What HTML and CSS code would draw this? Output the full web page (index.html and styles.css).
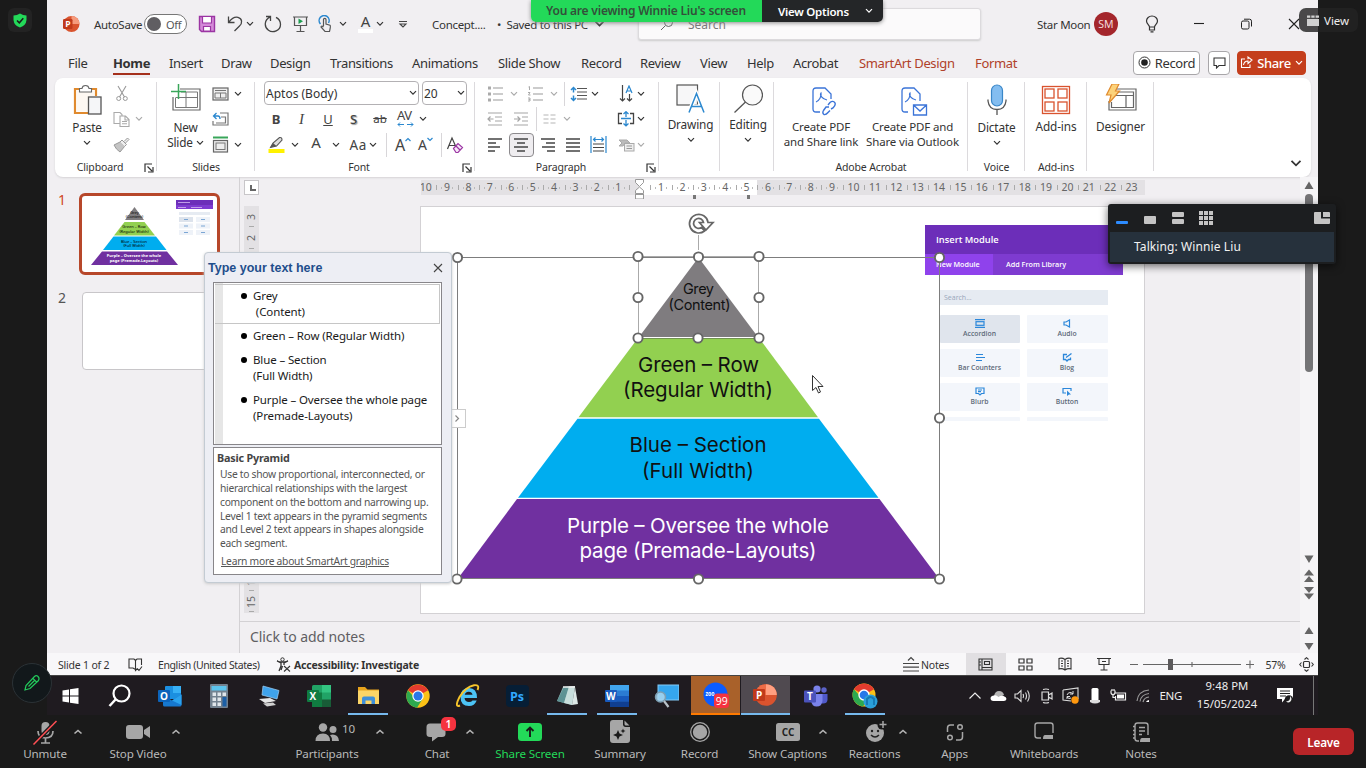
FILE: index.html
```html
<!DOCTYPE html>
<html lang="en">
<head>
<meta charset="utf-8">
<title>Winnie Liu's screen</title>
<link rel="stylesheet" href="styles.css">
</head>
<body>
<svg class="defs" width="0" height="0">
  <symbol id="chev" viewBox="0 0 8 6"><path d="M1 1.200 4 4.200 7 1.200" fill="none" stroke="currentColor" stroke-width="1.200"/></symbol>
  <symbol id="launch" viewBox="0 0 10 10"><path d="M1 9V1H8M3.500 3.500 8 8M9 4V9H4" fill="none" stroke="#333" stroke-width="1.200"/></symbol>
  <symbol id="up" viewBox="0 0 12 8"><path d="M2.500 5.500 6 2.500 9.500 5.500" fill="none" stroke="#b5b5b5" stroke-width="1.600"/></symbol>
</svg>

<div class="meeting">
  <main class="desktop">
    <header class="titlebar">
      <svg width="18" height="18" viewBox="0 0 18 18"><circle cx="9.500" cy="9" r="8" fill="#d9532e"/><path d="M9.500 1A8 8 0 0 1 17.500 9H9.500Z" fill="#f59a7c"/><rect x="1" y="4" width="9.500" height="10" rx="1.200" fill="#c13a1b"/><text x="3.200" y="12" class="logo-p">P</text></svg>
      <span class="t-small">AutoSave</span>
      <span class="toggle"><i></i>Off</span>
      <svg width="18" height="18" viewBox="0 0 18 18"><path d="M1.500 1.500H16.500V16.500H3.500L1.500 14.500Z" fill="#d48ad8" stroke="#9b35a3" stroke-width="1.400"/><path d="M4.500 1.500H13.500V8H4.500ZM5.500 16V11.500H12.500V16Z" fill="#fff" stroke="#9b35a3" stroke-width="1.200"/></svg>
      <svg width="17" height="18" viewBox="0 0 17 18"><path d="M1.500 1.500V7.500H7.500M1.700 7.300C5 3 8 1.500 11 2.300 15.500 3.500 15.500 8.500 12.500 11L7.500 16" fill="none" stroke="#444" stroke-width="1.300"/></svg>
      <svg class="chev" width="8" height="6"><use href="#chev"/></svg>
      <svg width="18" height="18" viewBox="0 0 18 18"><path d="M2 1.500H6.500V6M6 2.200C0 5 0 12 4.500 15.300 9 18.500 16.500 15.500 16.500 9.500 16.500 6 14.500 3.500 12 2.300" fill="none" stroke="#444" stroke-width="1.300"/></svg>
      <svg width="17" height="18" viewBox="0 0 17 18"><path d="M1 2H16M2.500 2V10.500H14.500V2M8.500 10.500V16M4.500 16.500H12.500" fill="none" stroke="#555" stroke-width="1.200"/><path d="M6.500 3.500 11 6.200 6.500 9Z" fill="#1d9d50"/></svg>
      <svg width="16" height="18" viewBox="0 0 16 18"><path d="M2.500 9A5 5 0 1 1 10.500 8" fill="none" stroke="#2b88cf" stroke-width="1.500"/><path d="M5.500 11V4.500C5.500 3 8 3 8 4.500V9L12 10.300C13 11 12 14 11.500 16.500H7L3 12C3 10.800 4.500 10.800 5.500 12" fill="#f1eff2" stroke="#555" stroke-width="1.200"/></svg>
      <svg class="chev" width="8" height="6"><use href="#chev"/></svg>
      <span class="fonta">A</span>
      <svg class="chev" width="8" height="6"><use href="#chev"/></svg>
      <svg width="10" height="9" viewBox="0 0 10 9"><path d="M1 1.500H9M2 4 5 7 8 4Z" fill="none" stroke="#444" stroke-width="1.100"/></svg>
      <span class="t-small">Concept....</span>
      <span class="t-small saved">•&nbsp; Saved to this PC <svg class="chev" width="11" height="8"><use href="#chev"/></svg></span>
      <div class="search"><svg width="14" height="14" viewBox="0 0 14 14"><path d="M1 13 5 9" stroke="#666"/><circle cx="8.500" cy="5.500" r="4" fill="none" stroke="#666"/></svg><span>Search</span></div>
      <span class="t-small name">Star Moon</span>
      <span class="avatar">SM</span>
      <svg width="14" height="18" viewBox="0 0 14 18"><path d="M4.500 12C4.500 10 1.500 9 1.500 6A5.500 5 0 0 1 12.500 6C12.500 9 9.500 10 9.500 12ZM4.500 12V15H9.500V12M5.500 16.800H8.500" fill="none" stroke="#333" stroke-width="1.200"/></svg>
      <svg width="12" height="12" viewBox="0 0 12 12"><path d="M1 5.500H11" stroke="#222" stroke-width="1.100"/></svg>
      <svg width="13" height="12" viewBox="0 0 13 12"><rect x="1.500" y="3" width="7.500" height="8" rx="1.500" fill="none" stroke="#222"/><path d="M4 1.200H9.500Q11.500 1.200 11.500 3.200V8.500" fill="none" stroke="#222"/></svg>
      <svg width="12" height="12" viewBox="0 0 12 12"><path d="M1 1 11 11M11 1 1 11" stroke="#222" stroke-width="1.100"/></svg>
    </header>

    <nav class="tabs">
      <span>File</span><span class="on">Home</span><span>Insert</span><span>Draw</span><span>Design</span><span>Transitions</span><span>Animations</span><span>Slide Show</span><span>Record</span><span>Review</span><span>View</span><span>Help</span><span>Acrobat</span><span class="ctx">SmartArt Design</span><span class="ctx">Format</span>
      <span class="btn"><svg width="13" height="13" viewBox="0 0 13 13"><circle cx="6.500" cy="6.500" r="5.500" fill="none" stroke="#333"/><circle cx="6.500" cy="6.500" r="3.300" fill="#222"/></svg>Record</span>
      <span class="btn comment"><svg width="13" height="12" viewBox="0 0 13 12"><path d="M1 1H12V8.500H6L3.500 11V8.500H1Z" fill="none" stroke="#333" stroke-width="1.100"/></svg></span>
      <span class="btn share"><svg width="13" height="13" viewBox="0 0 13 13"><path d="M5 3H1.500V11.500H10V8.500M3.500 9C4 6 6 5 8 5V7.500L12 4 8 1V3.200" fill="none" stroke="#fff" stroke-width="1.100"/></svg>Share<svg width="8" height="6"><use href="#chev"/></svg></span>
    </nav>

    <section class="ribbon">
      <div class="group">
        <div class="body clip">
          <div class="big"><svg width="30" height="32" viewBox="0 0 30 32"><path d="M9 5H3V29H16M20 5H24V12" fill="none" stroke="#e08a2e" stroke-width="2.200"/><path d="M4.500 6.500H22V13H16V27.500H4.500Z" fill="#fdf8f2"/><path d="M7.500 8V4.500H10C10.500 0.500 16.500 0.500 17 4.500H19.500V8Z" fill="#fff" stroke="#666" stroke-width="1.100"/><rect x="16.500" y="13" width="12.500" height="17" fill="#f5f6f8" stroke="#555" stroke-width="1.300"/></svg><span>Paste</span><svg class="chev" width="8" height="6"><use href="#chev"/></svg></div>
          <div class="trio pale">
            <svg width="12" height="17" viewBox="0 0 12 17"><path d="M2 1 8.500 12M10 1 3.500 12" stroke="#999" fill="none" stroke-width="1.100"/><circle cx="2.700" cy="13.500" r="2" fill="none" stroke="#999"/><circle cx="9.300" cy="13.500" r="2" fill="none" stroke="#999"/></svg><i></i>
            <svg width="17" height="17" viewBox="0 0 17 17"><path d="M7 12.500H1V1.500H7L9 3.500V5M7 15.500V5H12.500L16 8.500V15.500ZM12 5.500V9H16M9 10.500H14M9 12.800H14" fill="none" stroke="#aaa" stroke-width="1.100"/></svg><svg class="chev" width="8" height="6"><use href="#chev"/></svg>
            <svg width="17" height="16" viewBox="0 0 17 16"><path d="M1 8 7 5 11.500 9.500 7 15Q3 12.500 1 8Z" fill="#c4c4c4" stroke="#999"/><path d="M7 5 9 3 13.500 7.500 11.500 9.500M11 4.500 14.500 1 16 2.500 12.500 6" fill="#eee" stroke="#999"/></svg><i></i>
          </div>
        </div>
        <div class="label">Clipboard<svg width="10" height="10"><use href="#launch"/></svg></div>
      </div>
      <div class="group">
        <div class="body slides">
          <div class="big"><svg width="32" height="32" viewBox="0 0 32 32"><path d="M10 5H30V26H3V13" fill="none" stroke="#666" stroke-width="1.200"/><path d="M11 8H27.500V23.500H5.500V14M5.500 13.500H27.500M16 8V23.500" fill="none" stroke="#777" stroke-width="1"/><path d="M8.500 0V15M1 7.500H16" stroke="#39a65a" stroke-width="1.500"/></svg><span>New</span><span>Slide <svg class="chev" width="8" height="6"><use href="#chev"/></svg></span></div>
          <div class="trio">
            <svg width="17" height="14" viewBox="0 0 17 14"><rect x="1" y="1" width="15" height="12" fill="#eee" stroke="#666" stroke-width="1.200"/><path d="M3 3.500H14M3 6H14V11H3ZM8.500 6V11" fill="none" stroke="#777"/></svg><svg class="chev" width="8" height="6"><use href="#chev"/></svg>
            <svg width="17" height="14" viewBox="0 0 17 14"><path d="M8 1H16V13H1V9M4 11H13.500V5H9" fill="none" stroke="#777" stroke-width="1.200"/><path d="M4.500 1 1.500 4 4.500 7M2 4H6Q8 4 8 7" fill="none" stroke="#2b88cf" stroke-width="1.300"/></svg><i></i>
            <svg width="17" height="17" viewBox="0 0 17 17"><path d="M1 1.500H16" stroke="#39a65a" stroke-width="2"/><rect x="1.500" y="4.500" width="14" height="11.500" fill="#eee" stroke="#666" stroke-width="1.200"/><rect x="4" y="7" width="9" height="6.500" fill="none" stroke="#777"/></svg><svg class="chev" width="8" height="6"><use href="#chev"/></svg>
          </div>
        </div>
        <div class="label">Slides</div>
      </div>
      <div class="group">
        <div class="body rows">
          <div class="combos"><span class="combo">Aptos (Body)<svg width="8" height="6"><use href="#chev"/></svg></span><span class="combo">20<svg width="8" height="6"><use href="#chev"/></svg></span></div>
          <div class="row f2"><b>B</b><em>I</em><u>U</u><b class="shadow">S</b><s>ab</s><span class="av">AV<svg width="17" height="5" viewBox="0 0 17 5"><path d="M3 .5 1 2.500 3 4.500M1 2.500H7M10 2.500H16M14 .5 16 2.500 14 4.500" fill="none" stroke="#2b88cf"/></svg></span><svg class="chev" width="8" height="6"><use href="#chev"/></svg></div>
          <div class="row f3">
            <svg width="17" height="17" viewBox="0 0 17 17"><rect x=".5" y="13" width="16" height="4" fill="#fff200"/><path d="M2.500 11.500 5 7 11.500 1.500Q14 1 14 4L8.500 10Z" fill="#ddd" stroke="#555" stroke-width="1.100"/><path d="M2.500 11.500 5 7 8.500 10Z" fill="#555"/></svg><svg class="chev" width="8" height="6"><use href="#chev"/></svg>
            <span class="big-a">A</span><svg class="chev" width="8" height="6"><use href="#chev"/></svg><span class="aa">Aa</span><svg class="chev" width="8" height="6"><use href="#chev"/></svg><i class="sep"></i>
            <span class="grow">A<svg width="6" height="5" viewBox="0 0 6 5"><path d="M.5 4 3 1.500 5.500 4" fill="none" stroke="#2b88cf" stroke-width="1.200"/></svg></span>
            <span class="shrink">A<svg width="6" height="5" viewBox="0 0 6 5"><path d="M.5 1 3 3.500 5.500 1" fill="none" stroke="#2b88cf" stroke-width="1.200"/></svg></span><i class="sep"></i>
            <svg width="18" height="18" viewBox="0 0 18 18"><path d="M1.500 13 6 2 10 11M3 9.500H9" fill="none" stroke="#444" stroke-width="1.200"/><path d="M7.500 12.500 12 7.500 16.500 11.500 12 16.500H10ZM10 10 14 14" fill="#f7e9f9" stroke="#9b35a3" stroke-width="1.200"/></svg>
          </div>
        </div>
        <div class="label">Font<svg width="10" height="10"><use href="#launch"/></svg></div>
      </div>
      <div class="group">
        <div class="body rows">
          <div class="row p1">
            <svg class="pale" width="17" height="16" viewBox="0 0 17 16"><path d="M1 2H4M1 8H4M1 14H4" stroke="#aaa" stroke-width="3"/><path d="M6 2H16M6 8H16M6 14H16" stroke="#999" stroke-width="1.200"/></svg><svg class="chev dim" width="8" height="6"><use href="#chev"/></svg>
            <svg width="17" height="16" viewBox="0 0 17 16"><path d="M6 2H16M6 8H16M6 14H16" stroke="#999" stroke-width="1.200"/><path d="M1.500 1 2.500 .5V4M1 6.500H3L1.500 9H3.500M1 12H3V15H1M1.500 13.500H3" stroke="#aaa" fill="none"/></svg><svg class="chev dim" width="8" height="6"><use href="#chev"/></svg><i class="sep"></i>
            <svg width="18" height="16" viewBox="0 0 18 16"><path d="M7 2.500H17M7 6H17M7 9.500H17M7 13H17" stroke="#555" stroke-width="1.200"/><path d="M3.500 1.500V6.500M1 4 3.500 1.500 6 4M3.500 14.500V9.500M1 12 3.500 14.500 6 12" fill="none" stroke="#2b88cf" stroke-width="1.500"/></svg><svg class="chev" width="8" height="6"><use href="#chev"/></svg>
            <svg width="16" height="17" viewBox="0 0 16 17"><path d="M3.500 0V16M1 13.500 3.500 16 6 13.500M10.500 9V16M8 13.500 10.500 16 13 13.500" fill="none" stroke="#444" stroke-width="1.200"/><path d="M7 8 10 1 13 8M8 6H12" fill="none" stroke="#2b88cf" stroke-width="1.200"/></svg><svg class="chev" width="8" height="6"><use href="#chev"/></svg>
          </div>
          <div class="row p2">
            <svg width="16" height="14" viewBox="0 0 16 14"><path d="M1 1H15M8 5H15M8 9H15M1 13H15M6.500 7H1M3.500 4.500 1 7 3.500 9.500" fill="none" stroke="#a5a5a5" stroke-width="1.200"/></svg>
            <svg width="16" height="14" viewBox="0 0 16 14"><path d="M1 1H15M9 5H15M9 9H15M1 13H15M1 7H7M4.500 4.500 7 7 4.500 9.500" fill="none" stroke="#a5a5a5" stroke-width="1.200"/></svg><i class="sep"></i>
            <svg width="13" height="10" viewBox="0 0 13 10"><path d="M.5 1H5.500M7.500 1H12.500M.5 5H5.500M7.500 5H12.500M.5 9H5.500M7.500 9H12.500" stroke="#b5b5b5" stroke-width="1.200"/></svg><svg class="chev dim" width="8" height="6"><use href="#chev"/></svg>
            <svg width="18" height="16" viewBox="0 0 18 16"><path d="M5 2.500H1.500V12.500H5M13 2.500H16.500V12.500H13" fill="none" stroke="#444" stroke-width="1.300"/><path d="M9 1V6M9 9V14.500M6.500 3 9 .7 11.500 3M6.500 12.500 9 14.800 11.500 12.500M4 7.500H14" fill="none" stroke="#2b88cf" stroke-width="1.300"/></svg><svg class="chev" width="8" height="6"><use href="#chev"/></svg>
          </div>
          <div class="row p3">
            <svg width="16" height="14" viewBox="0 0 16 14"><path d="M1 1H15M1 5H9M1 9H13M1 13H8" stroke="#444" stroke-width="1.300"/></svg>
            <span class="boxed"><svg width="16" height="14" viewBox="0 0 16 14"><path d="M1 1H15M4 5H12M1 9H15M4 13H12" stroke="#444" stroke-width="1.300"/></svg></span>
            <svg width="16" height="14" viewBox="0 0 16 14"><path d="M1 1H15M6 5H15M2 9H15M7 13H15" stroke="#444" stroke-width="1.300"/></svg>
            <svg width="16" height="14" viewBox="0 0 16 14"><path d="M1 1H15M1 5H15M1 9H15M1 13H15" stroke="#444" stroke-width="1.300"/></svg>
            <svg width="17" height="17" viewBox="0 0 17 17"><path d="M1 0V17M16 0V17M3 3.500H14M5.500 1.500 3.500 3.500 5.500 5.500M11.500 1.500 13.500 3.500 11.500 5.500" stroke="#2b88cf" stroke-width="1.200" fill="none"/><path d="M3 8H14M3 11.500H14M3 15H14" stroke="#444" stroke-width="1.200"/></svg>
            <svg width="17" height="14" viewBox="0 0 17 14"><path d="M1 2H9L12 5H7L5 8H1L4 5Z" fill="#bbb" stroke="#aaa"/><rect x="6.500" y="5.500" width="9.500" height="7.500" fill="#eee" stroke="#aaa"/><path d="M8.500 8H14M8.500 10.500H14" stroke="#999"/></svg><svg class="chev dim" width="8" height="6"><use href="#chev"/></svg>
          </div>
        </div>
        <div class="label">Paragraph<svg width="10" height="10"><use href="#launch"/></svg></div>
      </div>
      <div class="group"><div class="body big single"><svg width="29" height="29" viewBox="0 0 29 29"><rect x="1" y="1" width="20.500" height="20" fill="#f7f7f8" stroke="#555" stroke-width="1.200"/><path d="M13 28.500 20.500 9.500 28 28.500M15.500 22.500H25.500" fill="none" stroke="#fff" stroke-width="4"/><path d="M13 28.500 20.500 9.500 28 28.500M15.500 22.500H25.500" fill="none" stroke="#2b88cf" stroke-width="1.500"/></svg><span>Drawing</span><svg class="chev" width="8" height="6"><use href="#chev"/></svg></div></div>
      <div class="group"><div class="body big single"><svg width="29" height="29" viewBox="0 0 29 29"><circle cx="18.500" cy="11" r="10" fill="#fafafa" stroke="#555" stroke-width="1.200"/><path d="M.5 28.500 11.500 18" stroke="#555" stroke-width="1.300"/></svg><span>Editing</span><svg class="chev" width="8" height="6"><use href="#chev"/></svg></div></div>
      <div class="group">
        <div class="body adobe">
          <div class="big"><svg width="30" height="29" viewBox="0 0 30 29"><path d="M14 25H10Q7 25 7 22V4Q7 1 10 1H19L25 7V12" fill="none" stroke="#3b74d8" stroke-width="1.300"/><path d="M10 15C13 14 16 9 15 6 13.500 8 16 12 21 13" fill="none" stroke="#3b74d8" stroke-width="1.200"/><path d="M22 18 24 15.500Q27 13 29 16 30 18 27 21L25 22M23 20 20 20 17.500 23.500Q16 26 18 27.500 20 28 22 25.500L24 23.500" fill="none" stroke="#3b74d8" stroke-width="1.400"/></svg><span>Create PDF</span><span>and Share link</span></div>
          <div class="big"><svg width="32" height="29" viewBox="0 0 32 29"><path d="M11 25H8Q5 25 5 22V4Q5 1 8 1H17L23 7V14" fill="none" stroke="#3b74d8" stroke-width="1.300"/><path d="M8 15C11 14 14 9 13 6 11.500 8 14 12 19 13" fill="none" stroke="#3b74d8" stroke-width="1.200"/><path d="M16.500 18H29.500V28H16.500ZM16.500 18 23 24 29.500 18" fill="#fff" stroke="#3b74d8" stroke-width="1.300"/></svg><span>Create PDF and</span><span>Share via Outlook</span></div>
        </div>
        <div class="label">Adobe Acrobat</div>
      </div>
      <div class="group"><div class="body big"><svg width="20" height="32" viewBox="0 0 20 32"><rect x="4.500" y="1" width="11" height="21" rx="5.500" fill="#83bdf0" stroke="#3a87c8" stroke-width="1.200"/><path d="M1 15.500V17Q2 25.500 10 25.500 18 25.500 19 17V15.500M10 25.500V31" fill="none" stroke="#555" stroke-width="1.300"/></svg><span>Dictate</span><svg class="chev" width="8" height="6"><use href="#chev"/></svg></div><div class="label">Voice</div></div>
      <div class="group"><div class="body big"><svg width="30" height="31" viewBox="0 0 30 31"><g fill="#fff" stroke="#d9532e" stroke-width="1.300"><rect x="1.500" y="2.500" width="27" height="27"/><rect x="4" y="5" width="9" height="9"/><rect x="17" y="5" width="9" height="9"/><rect x="4" y="18" width="9" height="9"/><rect x="17" y="18" width="9" height="9"/></g></svg><span>Add-ins</span></div><div class="label">Add-ins</div></div>
      <div class="group"><div class="body big"><svg width="32" height="31" viewBox="0 0 32 31"><path d="M10 5H31V26H4V17M12 8H28.500V23.500H6.500V18M11 11.500H28.500M21 11.500V23.500" fill="none" stroke="#666" stroke-width="1.200"/><path d="M7 0H14L10.500 7H14.500L4 19 6 11H1.500Z" fill="#fcd27a" stroke="#e08a2e" stroke-width="1.200"/></svg><span>Designer</span></div></div>
      <div class="collapse"><svg class="chev" width="12" height="9"><use href="#chev"/></svg></div>
    </section>

    <section class="workspace">
      <aside class="thumbs">
        <div class="thumb on"><b>1</b><div class="mini">
          <svg width="134" height="76" viewBox="0 0 134 76"><path d="M51.500 12 61 25H42Z" fill="#7f7c7f"/><path d="M41.500 27H61.500L72 40.500H31Z" fill="#92d050"/><path d="M30.500 41.500H73L83.500 55H20Z" fill="#00adef"/><path d="M19 56.500H84L95 70H8Z" fill="#7030a0"/><g class="mini-t"><text x="51.500" y="19">Grey</text><text x="51.500" y="23">(Content)</text><text x="51" y="32.500">Green – Row</text><text x="51" y="37.500">(Regular Width)</text><text x="51" y="47.500">Blue – Section</text><text x="51" y="52">(Full Width)</text><g fill="#fff"><text x="51" y="62" font-weight="bold">Purple – Oversee the whole</text><text x="51" y="66.500" font-weight="bold">page (Premade-Layouts)</text></g></g>
          <path d="M93 5H130V14H93Z" fill="#6c2eb9"/><path d="M93 10H130V14H93Z" fill="#7e3bd0"/><path d="M95 7.500H107M95 12.500H103M108 12.500H119" stroke="#d4b8f3" stroke-width=".8"/><path d="M96 17H127V20H96Z" fill="#e6ebf2"/><path d="M96 22H110V27H96Z" fill="#dde3ec"/><path d="M113 22H127V27H113ZM96 28.500H110V33.500H96ZM113 28.500H127V33.500H113ZM96 35H110V40H96ZM113 35H127V40H113Z" fill="#eef2f8"/><path d="M101 24.500H105M118 24.500H122M101 31H105M118 31H122M101 37.500H105M118 37.500H122" stroke="#7ba6d4" stroke-width="1"/></svg>
        </div></div>
        <div class="thumb"><b>2</b><div class="mini"></div></div>
      </aside>

      <div class="editor">
        <div class="hbar"><span class="corner"></span>
          <div class="ruler"><div class="ticks"><i class="d">10</i><i>9</i><i>8</i><i>7</i><i>6</i><i>5</i><i>4</i><i>3</i><i>2</i><i>1</i><i class="mid"></i><i class="w">1</i><i class="w">2</i><i class="w">3</i><i class="w">4</i><i class="w">5</i><i>6</i><i>7</i><i>8</i><i>9</i><i class="d">10</i><i class="d">11</i><i class="d">12</i><i class="d">13</i><i class="d">14</i><i class="d">15</i><i class="d">16</i><i class="d">17</i><i class="d">18</i><i class="d">19</i><i class="d">20</i><i class="d">21</i><i class="d">22</i><i class="d">23</i></div></div>
        </div>
        <div class="stage">
          <div class="vruler"><div class="vticks"><i>3</i><i>2</i><i>1</i><i></i><i>1</i><i>2</i><i>3</i><i>4</i><i>5</i><i>6</i><i>7</i><i>8</i><i>9</i><i>10</i><i>11</i><i>12</i><i>13</i><i>14</i><i>15</i></div></div>
          <div class="slide">
            <div class="module">
              <div class="m-head"><span>Insert Module</span><span>×</span></div>
              <div class="m-tabs"><span>New Module</span><span>Add From Library</span></div>
              <div class="m-body">
                <div class="m-search">Search...</div>
                <div class="m-grid">
                  <div class="hot"><svg width="10" height="9" viewBox="0 0 10 9"><path d="M0 .7H10M0 8.300H10" stroke="#2b87da" stroke-width="1.200"/><rect x="1" y="2.700" width="8" height="3.600" fill="none" stroke="#2b87da" stroke-width="1.200"/></svg>Accordion</div>
                  <div><svg width="10" height="9" viewBox="0 0 10 9"><path d="M2 3H4L7.500 1V8L4 6H2Z" fill="none" stroke="#2b87da" stroke-width="1.200"/></svg>Audio</div>
                  <div><svg width="10" height="9" viewBox="0 0 10 9"><path d="M1 1.500H8M1 4.500H10M1 7.500H7" stroke="#2b87da" stroke-width="1.200"/></svg>Bar Counters</div>
                  <div><svg width="10" height="9" viewBox="0 0 10 9"><path d="M5 1.500H1.500V6.500H3.500L5 8 6.500 6.500H8.500V4.500M4 4.500 9.500 .5" fill="none" stroke="#2b87da" stroke-width="1.300"/></svg>Blog</div>
                  <div><svg width="10" height="9" viewBox="0 0 10 9"><path d="M1 1H9V6.500H6.500L5 8 3.500 6.500H1ZM3 3H7M3 4.700H6" fill="none" stroke="#2b87da" stroke-width="1.200"/></svg>Blurb</div>
                  <div><svg width="10" height="9" viewBox="0 0 10 9"><path d="M4 6H1V1.500H9V4" fill="none" stroke="#2b87da" stroke-width="1.200"/><path d="M5 3.500V9L7 7.500H9Z" fill="#2b87da"/></svg>Button</div>
                  <div></div><div></div>
                </div>
              </div>
            </div>
            <svg class="art" width="724" height="408" viewBox="421 206 724 408">
              <path d="M698.500 257.500 758 337H639Z" fill="#7f7c7f"/>
              <path d="M638 338H759L818 417.300H578.500Z" fill="#92d050"/>
              <path d="M577.500 418.700H819L878.500 497.700H518Z" fill="#00adef"/>
              <path d="M517 499H879.500L939 578.500H458Z" fill="#7030a0"/>
              <g class="ptext">
                <g font-size="14.500"><text x="698.500" y="293.500" textLength="31">Grey</text><text x="699.500" y="310" textLength="62">(Content)</text></g>
                <text x="698.500" y="371.500" textLength="121">Green – Row</text><text x="698" y="396.500" textLength="150">(Regular Width)</text>
                <text x="698" y="452" textLength="137">Blue – Section</text><text x="698" y="477.500" textLength="112">(Full Width)</text>
                <g fill="#fff"><text x="698" y="532.500" textLength="262">Purple – Oversee the whole</text><text x="698" y="558" textLength="237">page (Premade-Layouts)</text></g>
              </g>
              <path d="M457.500 257.500H939.500V578.500H457.500Z" fill="none" stroke="#7d7d7d"/>
              <path d="M698.500 235V250" stroke="#aaa"/>
              <path d="M638.500 256.500H758.500V338.500H638.500Z" fill="none" stroke="#555" stroke-dasharray="1 1"/>
              <g fill="#fff" stroke="#666" stroke-width="1.900"><circle cx="457.500" cy="257.500" r="4.600"/><circle cx="939.500" cy="257.500" r="4.600"/><circle cx="939.500" cy="418" r="4.600"/><circle cx="457" cy="579" r="4.600"/><circle cx="698.500" cy="579" r="4.600"/><circle cx="939.500" cy="579" r="4.600"/><circle cx="638" cy="256.500" r="4.600"/><circle cx="698.500" cy="257" r="4.600"/><circle cx="759" cy="256.500" r="4.600"/><circle cx="638" cy="297.500" r="4.600"/><circle cx="759" cy="297.500" r="4.600"/><circle cx="638" cy="338" r="4.600"/><circle cx="698" cy="338" r="4.600"/><circle cx="759" cy="338" r="4.600"/></g>
              <path d="M704.500 231A9.300 9.300 0 1 1 708 222.500H713L706 230 699.500 222.500H703.500A5 5 0 1 0 701.500 227.500Z" fill="#fff" stroke="#666" stroke-width="1.700"/>
              <g><rect x="451.500" y="409.500" width="14" height="18" fill="#fff" stroke="#ccc"/><path d="M455.500 415.500 458.500 418.500 455.500 421.500" fill="none" stroke="#888" stroke-width="1.200"/></g>
              <path d="M812.500 375.500V390.500L816 387.500 818.500 393 820.500 392 818 386.500H823Z" fill="#fff" stroke="#333"/>
            </svg>
          </div>
        </div>
        <div class="notes">Click to add notes</div>
      </div>
      <div class="scroll">
        <svg width="18" height="476" viewBox="1300 177 18 476"><path d="M1304.500 189 1309 181.500 1313.500 189ZM1304.500 555.500 1309 563 1313.500 555.500ZM1304 575.500 1309 569.500 1314 575.500ZM1304 582 1309 576 1314 582ZM1304 587 1309 593 1314 587ZM1304 593.500 1309 599.500 1314 593.500ZM1304.500 634 1309 627 1313.500 634ZM1304.500 643 1309 650 1313.500 643Z" fill="#666"/><rect x="1305" y="194" width="8" height="178" rx="4" fill="#757577"/></svg>
      </div>
    </section>

    <footer class="status">
      <span>Slide 1 of 2</span>
      <svg width="15" height="15" viewBox="0 0 15 15"><path d="M7.500 12.500 5 11H1V2H6L7.500 3.500 9 2H13.500V8M7.500 3.500V13.500L9.500 11.500M9 11.500 11 13.500 14 9.500" fill="none" stroke="#333" stroke-width="1.100"/></svg>
      <span class="lang">English (United States)</span>
      <svg width="15" height="15" viewBox="0 0 15 15"><circle cx="6.500" cy="2.500" r="1.700" fill="none" stroke="#333"/><path d="M1 4 5 6V9L3 14M12 4 8 6V8M1 4Q6 6 12 4M6.500 9 5 13" fill="none" stroke="#333" stroke-width="1.300"/><path d="M8 9 14 14.500M14 9 8 14.500" stroke="#333" stroke-width="1.100"/></svg>
      <b>Accessibility: Investigate</b>
      <svg width="16" height="16" viewBox="0 0 16 16"><path d="M0 7.500H16M0 11.200H16M0 15H16M5 4.500 8 1.500 11 4.500" fill="none" stroke="#444" stroke-width="1.200"/></svg>
      <span>Notes</span>
      <span class="view on"><svg width="15" height="13" viewBox="0 0 15 13"><path d="M1 1H14V12H1ZM4 1V12M4 9.500H14M6.500 3.500H11.500V6.500H6.500ZM1 4H3M1 7H3" fill="none" stroke="#333" stroke-width="1.100"/></svg></span>
      <span class="view"><svg width="15" height="13" viewBox="0 0 15 13"><path d="M1 1H6V5H1ZM9 1H14V5H9ZM1 8H6V12H1ZM9 8H14V12H9Z" fill="none" stroke="#333" stroke-width="1.200"/></svg></span>
      <span class="view"><svg width="14" height="14" viewBox="0 0 14 14"><path d="M7 2.500V13M7 2.500Q4 .5 1 1.500V12Q4 11 7 13 10 11 13 12V1.500Q10 .5 7 2.500M3 4H5M3 6.500H5M3 9H5M9 4H11M9 6.500H11M9 9H11" fill="none" stroke="#333" stroke-width="1.100"/></svg></span>
      <span class="view"><svg width="14" height="14" viewBox="0 0 14 14"><path d="M0 1.500H14M2 1.500V7.500H12V1.500M7 7.500V12.500M3.500 13H10.500M5 4.500H9" fill="none" stroke="#333" stroke-width="1.100"/></svg></span>
      <svg class="slider" width="126" height="14" viewBox="0 0 126 14"><path d="M1 7.500H9M14 7.500H112M63 5V10M117 7.500H125M121 3.500V11.500" stroke="#666" stroke-width="1.100"/><rect x="39" y="2" width="5" height="11" fill="#5c5a5c"/></svg>
      <span>57%</span>
      <svg width="15" height="15" viewBox="0 0 15 15"><rect x="4.500" y="4.500" width="6" height="6" rx="1" fill="none" stroke="#333" stroke-width="1.200"/><path d="M5.500 2.500 7.500 .7 9.500 2.500M5.500 12.500 7.500 14.300 9.500 12.500M2.500 5.500 .7 7.500 2.500 9.500M12.500 5.500 14.300 7.500 12.500 9.500" fill="none" stroke="#333" stroke-width="1.100"/></svg>
    </footer>

    <section class="taskbar">
      <div class="apps">
        <span><svg width="17" height="16" viewBox="0 0 17 16"><path d="M.5 2.500 7 1.500V7.500H.5ZM8 1.300 16.500 0V7.500H8ZM.5 8.500H7V14.500L.5 13.500ZM8 8.500H16.500V16L8 14.700Z" fill="#fff"/></svg></span>
        <span><svg width="24" height="24" viewBox="0 0 24 24"><circle cx="13.500" cy="9.500" r="8" fill="none" stroke="#fff" stroke-width="2.200"/><path d="M8 15 1.500 22" stroke="#fff" stroke-width="2.500"/></svg></span>
        <span><svg width="24" height="22" viewBox="0 0 24 22"><rect x="7" y="1" width="16" height="13" rx="1" fill="#1b8fe0"/><path d="M15 1H23V8H15Z" fill="#37b0f5"/><path d="M5 10 14 15.500 23.500 9.500V20Q23.500 21.500 22 21.500H6.500Q5 21.500 5 20Z" fill="#1678cf"/><path d="M14 15.500 23.500 9.500V20Z" fill="#2aa2ee"/><rect x="0" y="5" width="12" height="12" rx="1" fill="#0c64bb"/><text x="2" y="14.500" class="app-t">O</text></svg></span>
        <span><svg width="18" height="24" viewBox="0 0 18 24"><rect width="18" height="24" rx="1" fill="#72818f"/><rect x="1.500" y="2" width="15" height="4.500" fill="#5cc4ee"/><path d="M2.500 8.500H6V12H2.500ZM7.500 8.500H11V12H7.500ZM12.500 8.500H16V12H12.500ZM2.500 13.500H6V17H2.500ZM7.500 13.500H11V17H7.500ZM2.500 18.500H6V22H2.500ZM7.500 18.500H11V22H7.500Z" fill="#dfe5ea"/><rect x="12.500" y="13" width="4" height="9.500" fill="#1c5fa5"/></svg></span>
        <span><svg width="24" height="22" viewBox="0 0 24 22"><path d="M6 1 22 5.500 20 14 5 10Z" fill="#3fa3ec" stroke="#9fd0f5" stroke-width=".7"/><path d="M2 14 13 13 19 16 8 18Z" fill="#e6e6e6"/><path d="M6 18.500 16 17.500 19 20 10 21.500Z" fill="#cfcfcf"/></svg></span>
        <span><svg width="24" height="22" viewBox="0 0 24 22"><rect x="5" y="0" width="19" height="22" rx="1.500" fill="#21a366"/><path d="M5 7.500H15V22H6.500Q5 22 5 20.500Z" fill="#107c41"/><path d="M15 0H24V7.500H15Z" fill="#33c481"/><path d="M15 14.500H24V22H15Z" fill="#185c37"/><rect x="0" y="5" width="12" height="12" rx="1" fill="#107c41"/><text x="2.500" y="14.500" class="app-t">X</text></svg></span>
        <span class="run"><svg width="23" height="19" viewBox="0 0 23 19"><path d="M1 1H8L10.500 3.500H22V18H1Z" fill="#e8a41c"/><rect x="1" y="4.500" width="21" height="13.500" fill="#fbd567"/><path d="M5 18V12.500Q5 10.500 7 10.500H16Q18 10.500 18 12.500V18H14.500V14.500H8.500V18Z" fill="#3e8fd9"/></svg></span>
        <span><svg width="24" height="24" viewBox="0 0 24 24"><circle cx="12" cy="12" r="11.700" fill="#fbc116"/><path d="M12 12 1.900 6.200A11.700 11.700 0 0 1 22.100 6.200Z" fill="#e33b2e"/><path d="M12 12H7L1.900 6.200A11.700 11.700 0 0 0 11 23.700L16.500 15Z" fill="#2da94f"/><circle cx="12" cy="12" r="5.700" fill="#fff"/><circle cx="12" cy="12" r="4.500" fill="#2878e8"/></svg></span>
        <span><svg width="24" height="24" viewBox="0 0 24 24"><path d="M21 14H8.500Q9 18 13 18 15.500 18 16.500 16.500H20.700Q18.500 22 13 22 4.500 22 4.500 13 4.500 4 13 4 21 4 21 14ZM8.700 10.800H16.500Q16 7.800 12.700 7.800 9.500 7.800 8.700 10.800Z" fill="#4cc3f5"/><path d="M4 21.500Q-2 24 3.500 13 9.500 3 18 1.200 24 .5 21.500 6" fill="none" stroke="#f7c52b" stroke-width="1.900"/></svg></span>
        <span><svg width="23" height="22" viewBox="0 0 23 22"><rect width="23" height="22" rx="4" fill="#061e36"/><text x="4" y="15.500" class="ps">Ps</text></svg></span>
        <span class="run"><svg width="24" height="22" viewBox="0 0 24 22"><path d="M8 2 20 1 17 20 2 16Z" fill="#8eb8b9"/><path d="M2 16 9 2 14 1.500 9 18Z" fill="#5e9294"/><path d="M14 1.500 20 1 17 20 9 18Z" fill="#c8dedc"/><path d="M20 2 23 19 17 20Z" fill="#dde8e6"/><path d="M8 2H20" stroke="#eee" stroke-width="1.500"/></svg></span>
        <span class="run"><svg width="24" height="22" viewBox="0 0 24 22"><rect x="5" y="0" width="19" height="22" rx="1.500" fill="#2b7cd3"/><path d="M5 0H24V5.500H5Z" fill="#41a5ee"/><path d="M5 11H24V16.500H5Z" fill="#185abd"/><path d="M5 16.500H24V22H5Z" fill="#103f91"/><rect x="0" y="5" width="12" height="12" rx="1" fill="#185abd"/><text x="1" y="14.500" class="app-t">W</text></svg></span>
        <span><svg width="25" height="24" viewBox="0 0 25 24"><rect x="4" y="1" width="21" height="15" fill="#35a6ee" stroke="#84c9f5"/><circle cx="6.500" cy="13" r="5" fill="#a8d6ee" fill-opacity=".85" stroke="#7d9fb3" stroke-width="1.500"/><path d="M10 17 14.500 23" stroke="#b8c2c8" stroke-width="2.200"/></svg></span>
        <span class="zoomapp"><svg width="26" height="26" viewBox="0 0 26 26"><circle cx="12.500" cy="12.500" r="12" fill="#0b5cff"/><text x="2.500" y="14" class="zt" textLength="9" lengthAdjust="spacingAndGlyphs">zoo</text><rect x="11" y="11.500" width="15" height="14.500" rx="3.500" fill="#f5333f"/><text x="12.700" y="22.500" class="zn">99</text></svg></span>
        <span class="pptapp"><svg width="24" height="22" viewBox="0 0 24 22"><circle cx="13" cy="11" r="10.800" fill="#d9532e"/><path d="M13 .2A10.800 10.800 0 0 1 23.800 11H13Z" fill="#ff9f80"/><path d="M2.200 11A10.800 10.800 0 0 1 13 .2V11Z" fill="#ed6c47"/><rect x="0" y="5" width="12" height="12" rx="1" fill="#c13a1b"/><text x="3" y="14.500" class="app-t">P</text></svg></span>
        <span><svg width="24" height="22" viewBox="0 0 24 22"><circle cx="20" cy="5" r="2.700" fill="#5b62c8"/><circle cx="13" cy="4" r="3.600" fill="#7b83eb"/><path d="M15 9H23.500V15Q23 19 18 18.500Z" fill="#5059c9"/><path d="M7 9H18.500V16Q18 21.500 12.500 21.500 8 21.500 7 16Z" fill="#7b83eb"/><rect x="0" y="5.500" width="12" height="12" rx="1" fill="#4b53bc"/><text x="3" y="15" class="app-t">T</text></svg></span>
        <span class="run"><svg width="26" height="26" viewBox="0 0 26 26"><circle cx="12" cy="12" r="11.500" fill="#fbc116"/><path d="M12 12 1.900 6.200A11.700 11.700 0 0 1 22.100 6.200Z" fill="#e33b2e"/><path d="M12 12H7L1.900 6.200A11.700 11.700 0 0 0 11 23.500L16.500 15Z" fill="#2da94f"/><circle cx="12" cy="12" r="5.700" fill="#fff"/><circle cx="12" cy="12" r="4.300" fill="#2878e8"/><circle cx="18.500" cy="18.500" r="7" fill="#2a9fd8"/><path d="M15 22V16Q18.500 12 22 16V22" fill="none" stroke="#157ab5" stroke-width="2"/></svg></span>
      </div>
      <div class="tray">
        <svg width="14" height="9" viewBox="0 0 14 9"><path d="M1.500 7.500 7 2 12.500 7.500" fill="none" stroke="#eee" stroke-width="1.200"/></svg>
        <svg width="17" height="12" viewBox="0 0 17 12"><path d="M4 6Q5 1 9 1 13 1 14 5L8 8Z" fill="#b5b5b5"/><path d="M3.500 11Q.5 11 .5 8 1 5.500 4 5.500 6 4.500 8.500 7 11 5 13.500 6 16.500 7 16.500 9 16 11 14 11Z" fill="#fff"/></svg>
        <svg width="17" height="14" viewBox="0 0 17 14"><path d="M1 5H3.500L7 1.500V12.500L3.500 9H1ZM9 5Q10 7 9 9M11.500 3.500Q13.500 7 11.500 10.500M13.500 1.500Q17 7 13.500 12.500" fill="none" stroke="#ddd" stroke-width="1.100"/></svg>
        <svg width="12" height="16" viewBox="0 0 12 16"><path d="M1 4H7.500V12H1ZM7.500 7 11 5V11L7.500 9M2 1.500Q5 .5 8 1.500M2 14.500Q5 15.500 8 14.500" fill="none" stroke="#ddd" stroke-width="1.200"/></svg>
        <svg width="17" height="17" viewBox="0 0 17 17"><path d="M1 3 16 1V12M1 3V13L9 14" fill="none" stroke="#ddd" stroke-width="1.100"/><path d="M5 8Q6 5 9 5.500L11 7M11 4V7H8M5 12V9.500H8M5 10Q7 12.500 9 11" fill="none" stroke="#ddd"/><circle cx="13" cy="13" r="3.700" fill="#ff980e"/></svg>
        <svg width="10" height="16" viewBox="0 0 10 16"><rect x="1.500" y="0" width="7" height="13" rx="1.500" fill="#fff"/><path d="M0 12V14Q5 17 10 14V12" fill="#ddd"/></svg>
        <svg width="17" height="13" viewBox="0 0 17 13"><path d="M5.500 4H15.500V11H5.500V7M1 1.500V3.500Q1 5.500 3 5.500 5 5.500 5 3.500V1.500M2 0V2M4 0V2M3 5.500V8.500H5" fill="none" stroke="#eee" stroke-width="1.200"/><rect x="7" y="5.500" width="7" height="4" fill="#fff"/></svg>
        <svg width="14" height="14" viewBox="0 0 14 14"><path d="M1 12Q2 2 13 1M4 12.500Q5 5.500 13 4.500M7 13Q8 8.500 13 8" fill="none" stroke="#999" stroke-width="1.200"/><path d="M10 13Q10.500 11.500 13 11V13Z" fill="#fff"/></svg>
        <span class="eng">ENG</span>
        <span class="clock">9:48 PM<br>15/05/2024</span>
        <svg width="18" height="18" viewBox="0 0 18 18"><path d="M1 1H17V12H9L6 15.500V12H1Z" fill="#fff"/><path d="M4 4H14M4 6.500H14M4 9H10" stroke="#222"/><circle cx="13" cy="12.500" r="4.300" fill="#1c1b1d"/><path d="M14 9Q17 12 14 15 12 16 10 14.500 15 14 14 9Z" fill="#eee"/></svg>
      </div>
    </section>
  </main>

  <footer class="controls">
    <div class="tool"><svg width="26" height="26" viewBox="0 0 26 26"><rect x="9.500" y="3" width="8" height="13" rx="4" fill="#a6a6a6"/><path d="M6 12Q6 19 13.500 19 21 19 21 12M13.500 19V23.500M9 24H18" fill="none" stroke="#a6a6a6" stroke-width="1.700"/><path d="M1.500 25.500 24.500 2" stroke="#1a1a1a" stroke-width="4"/><path d="M1.500 25.500 24.500 2" stroke="#ff4f54" stroke-width="1.500"/></svg>Unmute</div>
    <svg width="12" height="8"><use href="#up"/></svg>
    <div class="tool"><svg width="26" height="26" viewBox="0 0 26 26"><rect x="1" y="6" width="17" height="14" rx="3" fill="#a6a6a6"/><path d="M19 11 25 7V19L19 15Z" fill="#a6a6a6"/></svg>Stop Video</div>
    <svg width="12" height="8"><use href="#up"/></svg>
    <div class="tool"><div class="people"><svg width="26" height="26" viewBox="0 0 26 26"><circle cx="9" cy="8.500" r="4.200" fill="#a6a6a6"/><circle cx="19" cy="10.500" r="3.500" fill="#a6a6a6"/><path d="M1.500 22Q1.500 14.500 9 14.500 16 14.500 16 22ZM18 22Q18 18 16 16 20 14.500 23 17 25 19 25 22Z" fill="#a6a6a6"/></svg><span>10</span></div>Participants</div>
    <svg width="12" height="8"><use href="#up"/></svg>
    <div class="tool"><svg width="26" height="26" viewBox="0 0 26 26"><path d="M6 4.500H18Q21.500 4.500 21.500 8V15Q21.500 18 18 18H14L8 22.500V18H6Q2.500 18 2.500 15V8Q2.500 4.500 6 4.500Z" fill="#a6a6a6"/></svg><em class="badge">1</em>Chat</div>
    <svg width="12" height="8"><use href="#up"/></svg>
    <div class="tool green"><svg width="26" height="26" viewBox="0 0 26 26"><rect x="1" y="4" width="24" height="18" rx="3.500" fill="#23d959"/><path d="M13 18V9M9.500 12 13 8.500 16.500 12" fill="none" stroke="#1a1a1a" stroke-width="1.900"/></svg>Share Screen</div>
    <div class="tool sum"><svg width="26" height="26" viewBox="0 0 26 26"><path d="M6 1H16V6Q16.500 8 18.500 8H23V21Q23 24 20 24H6Q3 24 3 21V4Q3 1 6 1ZM17.500 1.500 22.500 6.500H19Q17.500 6.500 17.500 5Z" fill="#a6a6a6"/><path d="M11 11 12.500 14.500 16 16 12.500 17.500 11 21 9.500 17.500 6 16 9.500 14.500ZM16 9.500 16.700 11.300 18.500 12 16.700 12.700 16 14.500 15.300 12.700 13.500 12 15.300 11.300Z" fill="#1a1a1a"/></svg>Summary</div>
    <div class="tool rec"><svg width="26" height="26" viewBox="0 0 26 26"><circle cx="13" cy="13" r="9.300" fill="none" stroke="#a6a6a6" stroke-width="1.300"/><circle cx="13" cy="13" r="7.200" fill="#a6a6a6"/></svg>Record</div>
    <div class="tool"><svg width="26" height="26" viewBox="0 0 26 26"><rect x="1" y="4" width="24" height="18" rx="2.500" fill="#a6a6a6"/><text x="13" y="17" class="cc">CC</text></svg>Show Captions</div>
    <svg width="12" height="8"><use href="#up"/></svg>
    <div class="tool"><svg width="26" height="26" viewBox="0 0 26 26"><circle cx="13" cy="14" r="9" fill="#a6a6a6"/><circle cx="20" cy="6" r="4.500" fill="#1a1a1a"/><path d="M21 2V9M17.500 5.500H24.500" stroke="#a6a6a6" stroke-width="1.500"/><circle cx="10" cy="12" r="1.200" fill="#222"/><circle cx="16" cy="12" r="1.200" fill="#222"/><path d="M9 16Q13 20 17 16" fill="none" stroke="#222" stroke-width="1.500"/></svg>Reactions</div>
    <svg width="12" height="8"><use href="#up"/></svg>
    <div class="tool"><svg width="26" height="26" viewBox="0 0 26 26"><path d="M5.500 13V9Q5.500 6 8.500 6H12M20.500 13V18Q20.500 21 17.500 21H14" fill="none" stroke="#a6a6a6" stroke-width="1.500"/><circle cx="18" cy="8" r="2.300" fill="none" stroke="#a6a6a6" stroke-width="1.500"/><circle cx="8" cy="18.500" r="2.300" fill="none" stroke="#a6a6a6" stroke-width="1.500"/></svg>Apps</div>
    <div class="tool"><svg width="26" height="26" viewBox="0 0 26 26"><path d="M10 19H6.500Q4 19 4 16.500V6.500Q4 4 6.500 4H19.500Q22 4 22 6.500V14" fill="none" stroke="#a6a6a6" stroke-width="1.400"/><path d="M14 16H22V20H12Q12 16 14 16Z" fill="#a6a6a6"/></svg>Whiteboards</div>
    <div class="tool"><svg width="26" height="26" viewBox="0 0 26 26"><path d="M11 22H9.500Q7 22 7 19.500V6.500Q7 4 9.500 4H17.500Q20 4 20 6.500V16M11 8.500H17M11 12H17M11 15.500H14M5 7.500H7M5 11.500H7M5 15.500H7M5 19H7" fill="none" stroke="#a6a6a6" stroke-width="1.400"/><path d="M14 19H22V23H12Q12 19 14 19Z" fill="#a6a6a6"/></svg>Notes</div>
    <button class="leave">Leave</button>
  </footer>

  <section class="textpane">
    <header>Type your text here<svg width="10" height="10" viewBox="0 0 10 10"><path d="M1 1 9 9M9 1 1 9" stroke="#444" stroke-width="1.100"/></svg></header>
    <ul>
      <li class="sel">Grey<br>&nbsp;(Content)</li><li>Green – Row (Regular Width)</li><li>Blue – Section<br>(Full Width)</li><li>Purple – Oversee the whole page<br>(Premade-Layouts)</li>
    </ul>
    <div class="about"><h4>Basic Pyramid</h4><p>Use to show proportional, interconnected, or<br>hierarchical relationships with the largest<br>component on the bottom and narrowing up.<br>Level 1 text appears in the pyramid segments<br>and Level 2 text appears in shapes alongside<br>each segment.</p><a>Learn more about SmartArt graphics</a></div>
  </section>

  <svg class="indents" width="112" height="20" viewBox="634 179 112 20"><path d="M635.500 179.500H643.500V182.500L639.500 186.500 635.500 182.500ZM639.500 187 643.500 190.500V193.500H635.500V190.500Z" fill="#fff" stroke="#999"/><rect x="635.500" y="194.500" width="8" height="4.500" fill="#fff" stroke="#999"/></svg>
  <div class="stops"><i></i><i></i></div>

  <div class="banner"><span>You are viewing Winnie Liu's screen</span><span>View Options<svg width="8" height="6"><use href="#chev"/></svg></span></div>
  <div class="shield"><svg width="14" height="15" viewBox="0 0 14 15"><path d="M7 .5Q10 2.500 13.500 2.500V7Q13 12.500 7 14.500 1 12.500 .5 7V2.500Q4 2.500 7 .5Z" fill="#23d959"/><path d="M4 7.500 6.300 9.800 10.300 5.300" fill="none" stroke="#1a1a1a" stroke-width="1.500"/></svg></div>
  <div class="viewbtn"><svg width="12" height="11" viewBox="0 0 12 11"><path d="M0 .5H3.300V2.800H0ZM4.300 .5H7.600V2.800H4.300ZM8.600 .5H12V2.800H8.600ZM0 4H12V11H0Z" fill="#d0d0d0"/></svg>View</div>
  <div class="speaker"><header>
    <svg width="12" height="3"><rect width="12" height="3" rx="1" fill="#2d8cff"/></svg>
    <svg width="12" height="8"><rect width="12" height="8" rx="1" fill="#c4c4c4"/></svg>
    <svg width="12" height="12"><rect width="12" height="5" rx="1" fill="#c4c4c4"/><rect y="7" width="12" height="5" rx="1" fill="#c4c4c4"/></svg>
    <svg width="14" height="14"><path d="M0 0H4V4H0ZM5 0H9V4H5ZM10 0H14V4H10ZM0 5H4V9H0ZM5 5H9V9H5ZM10 5H14V9H10ZM0 10H4V14H0ZM5 10H9V14H5ZM10 10H14V14H10Z" fill="#c4c4c4"/></svg>
    <svg width="16" height="12"><path d="M1 0H7V6.500H16V11Q16 12 15 12H1Q0 12 0 11V1Q0 0 1 0ZM9 0H15Q16 0 16 1V5H9Z" fill="#c4c4c4"/></svg>
  </header><div>Talking: Winnie Liu</div></div>
  <div class="pen"><svg width="18" height="18" viewBox="0 0 18 18"><path d="M2 16 3 11.500 11.500 2.500Q13 1 14.500 2 17 4 15.500 6.500L7 14.500ZM10 4.500 13.500 8M5.500 12.500 11.500 6.500" fill="none" stroke="#23c95b" stroke-width="1.200"/></svg></div>
</div>
</body>
</html>
```
FILE: styles.css
```css
* { box-sizing: border-box; }
body { margin: 0; width: 1366px; height: 768px; overflow: hidden; background: #1a1a1a; font-family: "Noto Sans", sans-serif; font-size: 12px; color: #333; }
svg { display: block; flex: none; }
i { font-style: normal; }
.defs { position: absolute; }
.meeting { position: relative; height: 768px; display: grid; grid-template-rows: 715px 53px; }
.desktop { width: 1271px; margin-left: 47px; background: #f1eff2; display: grid; grid-template-rows: 48px 30px 99px 476px 22px 40px; white-space: nowrap; overflow: hidden; }
.chev { color: #333; }
.chev.dim, .pale .chev { color: #aaa; }

/* Title bar */
.titlebar { display: grid; grid-template-columns: 32px 50px 54px 29px 19px 18px 28px 26px 21px 19px 18px 22px 34px 65px 141px 399px 57px 51px 48px 47px 48px 30px; padding-left: 15px; align-items: center; }
.t-small { font-size: 11.500px; letter-spacing: -.3px; }
.toggle { width: 43px; height: 20px; border: 1px solid #777; border-radius: 10px; background: #fff; display: flex; align-items: center; gap: 5px; padding-left: 2px; font-size: 11px; color: #555; letter-spacing: -.3px; }
.toggle i { width: 14px; height: 14px; border-radius: 50%; background: #605e62; }
.fonta { width: 15px; height: 18px; border-bottom: 4px solid #fff; font-size: 15px; line-height: 13px; text-align: center; color: #444; }
.saved { display: flex; align-items: center; gap: 6px; }
.search { width: 343px; height: 32px; margin-top: -1px; background: #fbfafb; border: 1px solid #dcdadd; border-radius: 3px; box-shadow: 0 1px 2px #ccc; display: flex; align-items: center; gap: 14px; padding-left: 21px; color: #777; font-size: 12px; }
.search span { padding-top: 2px; }
.avatar { width: 24px; height: 24px; border-radius: 50%; background: #a4262c; color: #f3d9da; text-align: center; line-height: 24px; font-size: 10.500px; }

/* Tabs */
.tabs { display: grid; grid-template-columns: 45px 56px 52px 49px 60px 82px 86px 83px 59px 60px 47px 46px 66px 116px 158px 75px 29px 70px; padding-left: 21px; align-items: center; font-size: 13px; letter-spacing: -.35px; }
.tabs .on { font-weight: bold; justify-self: start; height: 21px; margin-top: 2px; line-height: 18px; border-bottom: 2px solid #a5301c; }
.tabs .ctx { color: #b0412a; }
.btn { height: 24px; width: 67px; border: 1px solid #a8a6a9; border-radius: 4px; background: #fff; display: flex; align-items: center; justify-content: center; gap: 4px; margin-top: -1px; }
.btn.comment { width: 22px; }
.btn.share { width: 69px; background: #c43e1c; border-color: #c43e1c; color: #fff; font-weight: 500; }

/* Ribbon */
.ribbon { margin: 0 8px; background: #fff; border-radius: 8px; box-shadow: 0 1px 2px #d5d3d6; display: grid; grid-template-columns: 102px 98px 220px 184px 61px 54px 194px 57px 62px 67px 1fr; }
.group { position: relative; display: grid; grid-template-rows: 80px 19px; background: linear-gradient(#dcdadd, #dcdadd) right 4px / 1px 89px no-repeat; background-position: right 4px; }
.label { font-size: 10.500px; letter-spacing: -.15px; text-align: center; line-height: 17px; padding-right: 12px; display: grid; grid-template-columns: 1fr 0; align-items: center; }
.label svg { margin-left: -1px; }
.group:nth-child(2) .label, .group:nth-child(n+5) .label { padding-right: 0; }
.big { display: flex; flex-direction: column; align-items: center; padding-top: 6px; font-size: 11.800px; letter-spacing: -.15px; line-height: 15px; }
.big > span { display: flex; align-items: center; gap: 3px; }
.big > svg + span { margin-top: 4px; }
.big > .chev { margin-top: 5px; }
.single > svg:first-child + span { margin-top: 4px; }
.single { padding-left: 2px; }
.single > .chev { margin-top: 5px; }
.trio { display: grid; grid-template-columns: 20px 16px; grid-template-rows: repeat(3, 25.500px); padding-top: 3px; align-items: center; justify-items: center; }
.clip { display: grid; grid-template-columns: 64px 36px; }
.clip .trio { margin-left: -6px; grid-template-columns: 17px 18px; }
.slides { display: grid; grid-template-columns: 53px 40px; }
.slides .big { padding-left: 4px; }
.rows { display: grid; grid-template-rows: 25px 25px 27px; padding: 3px 0 0 9px; }
.group:nth-child(4) .rows { padding-left: 8px; }
.combos { display: grid; grid-template-columns: 158px 45px; }
.combo { height: 24px; width: 155px; border: 1px solid #b3b1b4; border-radius: 4px; display: flex; align-items: center; justify-content: space-between; padding: 0 1px 0 1px; font-size: 12px; }
.combo + .combo { width: 45px; }
.row { display: grid; align-items: center; justify-items: center; font-size: 13.500px; line-height: 20px; color: #444; }
.f2 { grid-template-columns: 24px 27px 26px 25px 28px 23px 11px; font-size: 13px; }
.f2 em { font-family: "Liberation Serif", serif; font-size: 15px; }
.f2 .shadow { text-shadow: 1px 1px 1px #999; font-weight: 500; }
.f2 s { font-size: 11.500px; }
.av { line-height: 11px; letter-spacing: -.5px; }
.av svg { margin-top: 1px; }
.f3 { grid-template-columns: 24px 14px 28px 11px 26px 12px 14px 20px 25px 6px 22px; }
.big-a { font-size: 15px; margin-top: -5px; }
.aa { justify-self: end; letter-spacing: .6px; }
.grow, .shrink { display: flex; font-size: 16px; }
.shrink { font-size: 14px; }
.grow svg, .shrink svg { margin-top: 2px; }
.sep { width: 1px; height: 24px; background: #d8d6d9; }
.p1 { grid-template-columns: 24px 14px 28px 10px 10px 20px 12px 34px 12px; }
.p2 { grid-template-columns: 24px 28px 3px 22px 13px 62px 12px; }
.p3 { grid-template-columns: 24px 28px 25px 26px 24px 25px 12px; }
.row > svg:nth-last-child(2) { justify-self: end; }
.f2 > svg:last-child, .f3 > svg:last-child { justify-self: center; }
.boxed { width: 25px; height: 24px; border: 1px solid #8c8a8d; border-radius: 4px; background: #efedf0; display: grid; place-items: center; }
.adobe { display: grid; grid-template-columns: 94px 98px; }
.adobe .big { padding-top: 9px; font-size: 11.500px; letter-spacing: -.15px; }
.adobe .big > svg + span { margin-top: 3px; }
.adobe .big:last-child { padding-right: 9px; }
.collapse { display: flex; justify-content: flex-end; align-items: flex-end; padding: 0 9px 9px 0; }

/* Workspace */
.workspace { display: grid; grid-template-columns: 193px 1060px 18px; }
.thumbs { border-right: 1px solid #d3d1d4; padding: 16px 0 0 11px; }
.thumb { display: flex; gap: 13px; height: 99px; }
.thumb b { font-weight: 400; font-size: 14px; line-height: 14px; width: 9px; color: #555; }
.thumb.on { height: 98px; }
.thumb.on b { color: #d04525; }
.mini { width: 136px; height: 78px; margin: 1px 0 0 2px; background: #fff; border: 1px solid #c8c6c9; border-radius: 4px; }
.on .mini { width: 141px; height: 82px; margin: 0 0 0 -1px; border: 3px solid #b7472a; border-radius: 6px; }
.mini svg { margin: -1px 0 0 1px; }
.mini-t { font: 4px "Noto Sans", sans-serif; text-anchor: middle; }
.editor { display: grid; grid-template-rows: 20px 424px 32px; min-width: 0; }
.hbar { display: flex; align-items: flex-start; padding: 3px 0 0 4px; }
.corner { width: 15px; height: 15px; background: linear-gradient(#666, #666) 5px 4px / 2px 6px no-repeat, linear-gradient(#666, #666) 5px 8px / 6px 2px no-repeat, #fff; border: 1px solid #c8c6c9; }
.ruler { width: 724px; height: 15px; margin-left: 162px; background: #e3e1e4; overflow: hidden; }
.ticks { display: flex; width: 728px; margin-left: -6px; }
.ticks i, .vticks i { flex: none; width: 21.400px; height: 15px; line-height: 15px; text-align: center; font-size: 10.500px; color: #666; background: linear-gradient(#aaa, #aaa) 0 50% / 1px 5px no-repeat, linear-gradient(#bbb, #bbb) 5px 50% / 1px 2px no-repeat, linear-gradient(#bbb, #bbb) 16px 50% / 1px 2px no-repeat; }
.ticks .d { background: linear-gradient(#aaa, #aaa) 0 50% / 1px 5px no-repeat; }
.ticks .w { background-color: #fff; }
.ticks .mid { background: linear-gradient(#aaa, #aaa) 0 50% / 1px 5px no-repeat, linear-gradient(90deg, #e3e1e4 50%, #fff 50%); }
.stage { display: flex; padding: 9px 0 0 4px; overflow: hidden; }
.vruler { width: 15px; height: 407px; background: #e3e1e4; overflow: hidden; }
.vticks { writing-mode: vertical-rl; transform: rotate(180deg); display: flex; flex-direction: row-reverse; width: 15px; height: 406px; }
.vticks i { width: 15px; height: 21.400px; background: linear-gradient(#aaa, #aaa) 50% 0 / 5px 1px no-repeat; }
.slide { position: relative; width: 725px; height: 408px; margin-left: 161px; background: #fff; border: 1px solid #d3d1d4; }
.art { position: absolute; left: 0; top: -1px; overflow: visible; }
.ptext { font: 20.500px Inter, sans-serif; text-anchor: middle; fill: #111; }
.ptext g[fill] { fill: #fff; }
.module { position: absolute; left: 504px; top: 18px; width: 198px; height: 196px; font-family: "Open Sans", sans-serif; overflow: hidden; }
.m-head { height: 29px; background: #6c2eb9; color: #fff; font-weight: 600; font-size: 9.300px; line-height: 30px; padding: 0 9px 0 11px; display: flex; justify-content: space-between; }
.m-tabs { height: 21px; background: #7e3bd0; color: #fff; font-weight: 600; font-size: 7.200px; line-height: 20px; display: grid; grid-template-columns: 68px 130px; }
.m-tabs span { padding-left: 11px; }
.m-tabs span + span { padding-left: 13px; }
.m-tabs span:first-child { background: #8f42ec; }
.m-body { padding: 15px 15px 0; background: #fff; }
.m-search { height: 15px; background: #e6ebf2; color: #98a6ba; font-size: 7px; line-height: 15px; padding-left: 4px; }
.m-grid { display: grid; grid-template-columns: 80px 81px; grid-auto-rows: 28px; gap: 6px 7px; margin-top: 10px; }
.m-grid div { background: #f3f6fb; border-radius: 1px; display: flex; flex-direction: column; align-items: center; font-size: 6.800px; line-height: 10px; font-weight: 600; color: #5c6978; padding-top: 4px; padding-right: 1px; gap: 1px; }
.m-grid .hot { background: #e0e5ed; }
.notes { border-top: 1px solid #d3d1d4; padding-left: 10px; line-height: 30px; font-size: 14px; color: #605e62; letter-spacing: -.1px; }
.scroll { background: #f5f4f6; }

/* Status bar */
.status { background: #f8f7f9; display: grid; grid-template-columns: 70px 30px 118px 18px 609px 18px 45px 39.500px 39.500px 39.500px 39px 142px 33px 20px; padding-left: 11px; align-items: center; font-size: 10.500px; letter-spacing: -.2px; }
.status > span:not(.view), .status > b { padding-top: 1px; }
.status .lang { letter-spacing: -.4px; }
.slider { margin-left: 5.500px; }
.view { height: 22px; display: grid; place-items: center; }
.view.on { background: #e1dfe2; }

/* Taskbar */
.taskbar { background: #1f1b20; display: flex; border-top: 1px solid #444; }
.apps { margin-left: -1.500px; display: grid; grid-template-columns: repeat(17, 49.700px); width: 845px; }
.apps span { display: grid; place-items: center; height: 39px; }
.apps .run { background: linear-gradient(#76b9ed, #76b9ed) 50% 100% / 40px 2px no-repeat; }
.apps .zoomapp { background: #a9612a; border-bottom: 2px solid #ff7a00; margin-right: 1px; }
.apps .pptapp { background: #504a50; border-bottom: 2px solid #76b9ed; margin-right: 1px; }
.app-t, .logo-p { font: bold 10px "Open Sans", sans-serif; fill: #fff; }
.logo-p { font-size: 8.500px; }
.ps { font: bold 12.500px "Open Sans", sans-serif; fill: #31a8ff; }
.zt { font: bold 6.500px "Open Sans", sans-serif; fill: #fff; }
.zn { font: 10.500px "Open Sans", sans-serif; fill: #fff; }
.tray { margin-left: 72px; display: grid; grid-template-columns: repeat(8, 24px) 35px 75px 40px; align-items: center; justify-items: center; color: #eee; font-size: 11.500px; letter-spacing: -.3px; padding-right: 8px; border-right: 1px solid #777; }
.eng { justify-self: start; padding-left: 5px; }
.clock { text-align: center; line-height: 18px; padding-bottom: 1px; letter-spacing: .05px; font-size: 11.300px; }

/* Meeting controls */
.controls { display: grid; grid-template-columns: 54px 34px 64px 110px 94px 36px 54px 26px 80px 80px 108px 59px 35px 45px 31px 53px 126px 68px 191px; padding-left: 18px; color: #b9b9b9; font-size: 11.600px; letter-spacing: -.12px; }
.tool { position: relative; display: flex; flex-direction: column; align-items: center; padding-top: 4px; line-height: 18px; white-space: nowrap; }
.controls > svg { margin-top: 13px; }
.green { color: #23d959; }
.sum { padding-left: 20px; }
.rec { padding-right: 9px; }
.people { display: flex; gap: 2px; margin-left: 15px; }
.people span { line-height: 20px; }
.badge { position: absolute; left: 31px; top: 2px; width: 15px; height: 14px; border-radius: 5px; background: #f5333f; color: #fff; font: 600 10.500px/14px "Noto Sans", sans-serif; text-align: center; }
.cc { font: bold 10px "Open Sans", sans-serif; text-anchor: middle; fill: #222; }
.leave { width: 61px; height: 27px; margin: 13px 12px 0 0; justify-self: end; border: 0; border-radius: 6px; background: #b82528; color: #fff; font: 600 11.800px "Noto Sans", sans-serif; letter-spacing: -.2px; }

/* SmartArt text pane */
.textpane { position: absolute; left: 204px; top: 252px; width: 248px; height: 331px; background: #edeef4; border: 1px solid #c3cbd3; border-radius: 4px; padding: 0 9px 0 8px; box-shadow: 0 1px 3px #ccc; white-space: nowrap; }
.textpane header { height: 29px; display: flex; align-items: center; justify-content: space-between; margin: 0 -5px; font: bold 12.500px "Liberation Sans", sans-serif; color: #1f4e8c; padding-right: 4px; }
.textpane ul { list-style: none; margin: 0; height: 163px; border: 1px solid #88868a; padding: 1px; background: linear-gradient(90deg, #fff 1px, #e6e6e6 1px 9px, #fff 9px); }
.textpane li { position: relative; padding: 2px 0 6px 38px; line-height: 16px; font-size: 11.500px; letter-spacing: -.12px; color: #1a1a1a; }
.textpane li::before { content: ""; position: absolute; left: 26px; top: 7px; width: 6px; height: 6px; border-radius: 50%; background: #000; }
.textpane .sel { height: 40px; border: 1px solid #c6c6c6; border-left: 0; padding-top: 3px; margin-bottom: 2px; }
.textpane .sel::before { top: 8px; }
.about { margin-top: 2px; height: 128px; border: 1px solid #88868a; background: #fff; padding: 1px 3px; font-size: 10.300px; line-height: 13.850px; color: #555; letter-spacing: -.28px; }
.about h4 { margin: 0; font-size: 10.800px; line-height: 17px; color: #444; letter-spacing: -.2px; }
.about p { margin: 2px 0 4px 3px; }
.about a { margin-left: 4px; text-decoration: underline; }

/* Ruler markers */
.indents { position: absolute; left: 634px; top: 179px; }
.stops { position: absolute; left: 693px; top: 195px; display: flex; gap: 51px; }
.stops i { width: 3px; height: 4px; background: #777; }

/* Meeting overlays */
.banner { position: absolute; left: 531px; top: 0; width: 352px; height: 22px; display: grid; grid-template-columns: 231px 121px; line-height: 21px; font-weight: 600; white-space: nowrap; border-radius: 0 0 5px 5px; overflow: hidden; box-shadow: 0 1px 4px #888; }
.banner span { background: #23d959; color: #33503a; padding-left: 15px; font-size: 12px; letter-spacing: -.2px; }
.banner span + span { background: #242628; color: #fff; display: flex; align-items: center; justify-content: space-between; padding: 0 10px 0 16px; font-size: 11.500px; letter-spacing: -.25px; }
.shield { position: absolute; left: 8px; top: 8px; width: 24px; height: 24px; border-radius: 6px; background: #232323; display: grid; place-items: center; }
.viewbtn { position: absolute; left: 1299px; top: 8px; width: 59px; height: 24px; border-radius: 7px; background: rgba(35, 35, 35, .82); color: #eee; display: flex; align-items: center; gap: 5px; padding-left: 8px; font-size: 11.500px; }
.speaker { position: absolute; left: 1108px; top: 204px; width: 228px; height: 60px; background: #1c1e20; border-radius: 3px; padding: 0 2px; box-shadow: 0 2px 9px #0009; color: #f2f2f2; font-size: 12px; letter-spacing: .1px; }
.speaker header { height: 28px; display: grid; grid-template-columns: 28px 28px 27px 115px 16px; align-items: center; padding-left: 6px; }
.speaker header svg:first-child { margin-top: 9px; }
.speaker header svg:nth-child(2) { margin-top: 4px; }
.speaker div { height: 30px; line-height: 30px; background: #26313c; padding-left: 24px; }
.pen { position: absolute; left: 12px; top: 663px; width: 40px; height: 40px; border-radius: 50%; background: #12181b; border: 1px solid #2b3236; display: grid; place-items: center; }
```
